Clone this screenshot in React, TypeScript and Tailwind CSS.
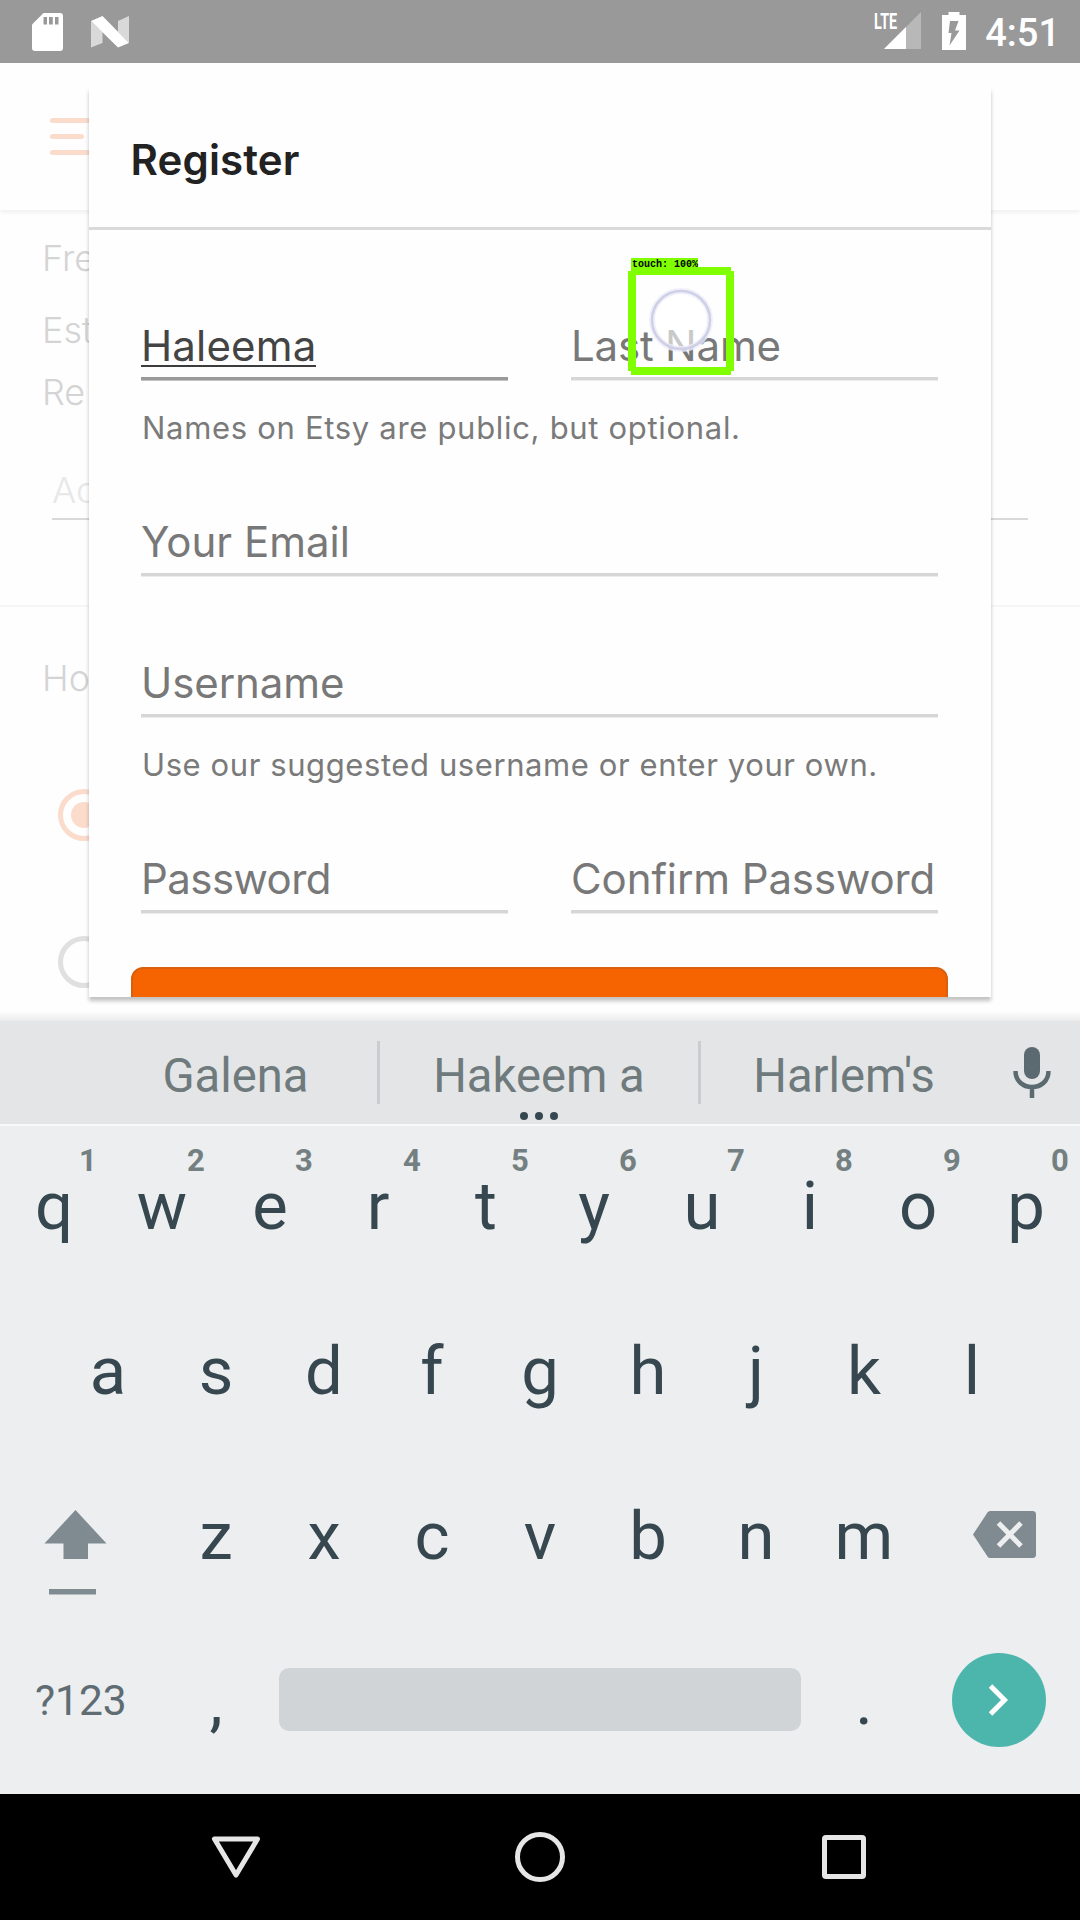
import type { ReactNode } from "react";
import { clsx } from "clsx";

function SdCardIcon() {
  return (
    <svg width="31" height="38" viewBox="0 0 31 38" fill="none">
      <path d="M11.5 0H28a3 3 0 0 1 3 3v32a3 3 0 0 1-3 3H3a3 3 0 0 1-3-3V11.500z" fill="#fff" />
      <path d="M11.500 4h3.500v7.500h-3.500zM17 4h3.800v7.500H17zM23 4h3.500v7.500H23z" fill="#999" />
    </svg>
  );
}

function NougatIcon() {
  return (
    <svg width="38" height="32" viewBox="0 0 38 32" fill="none">
      <path d="M0 5l11.500 11v11L0 31.500z" fill="#d9d9d9" />
      <path d="M38 0v27L27 16V5z" fill="#d9d9d9" />
      <path d="M0 5L11.500 0 38 27l-11 4.500z" fill="#fff" />
    </svg>
  );
}

function SignalIcon() {
  return (
    <svg width="37" height="37" viewBox="0 0 37 37">
      <path d="M37 0v37H0z" fill="#b8b8b8" />
      <path d="M22 15v22H0z" fill="#fff" />
    </svg>
  );
}

function BatteryIcon() {
  return (
    <svg width="24" height="38" viewBox="0 0 24 38">
      <path d="M6.500 0h11v3H24v35H0V3h6.500z" fill="#fff" />
      <path d="M8 9h8.500l-3.500 9.500H17.500L7.500 33.500l2-12.500H6.500z" fill="#999" />
    </svg>
  );
}

function StatusBar() {
  return (
    <div className="flex h-[63px] items-start bg-[#999999]">
      <div className="flex gap-[28px] pl-[32px] pt-[13px]">
        <SdCardIcon />
        <div className="pt-[3px]">
          <NougatIcon />
        </div>
      </div>
      <div className="ml-auto flex items-start pr-[20px]">
        <div className="relative mt-[12px]">
          <SignalIcon />
          <span className="absolute -left-[10px] -top-[2px] origin-left scale-x-[0.64] font-[Roboto] text-[22.500px] font-bold leading-[22px] text-white">
            LTE
          </span>
        </div>
        <div className="ml-[21px] mt-[12px]">
          <BatteryIcon />
        </div>
        <span className="ml-[19px] mt-[9px] font-[Roboto] text-[38px] font-medium leading-[48px] text-white">4:51</span>
      </div>
    </div>
  );
}

function BackgroundText({ children, className }: { children: string; className?: string }) {
  return <p className={clsx("text-[36px] font-light leading-[44px]", className ?? "text-[#d4d4d4]")}>{children}</p>;
}

function BackgroundPage() {
  return (
    <div className="flex h-full flex-col overflow-hidden bg-[#fefefe]">
      <div className="flex h-[147px] shrink-0 flex-col gap-[11px] pl-[50px] pt-[55px] shadow-[0_2px_5px_rgba(0,0,0,0.07)]">
        <div className="h-[5px] w-[50px] rounded-full bg-[#fbdccc]" />
        <div className="h-[5px] w-[34px] rounded-full bg-[#fbdccc]" />
        <div className="h-[5px] w-[50px] rounded-full bg-[#fbdccc]" />
      </div>
      <div className="h-[397px] shrink-0 border-b-2 border-[#f6f6f6] pl-[42px] pt-[26px]">
        <BackgroundText>Fre</BackgroundText>
        <BackgroundText className="mt-[28px] text-[#d4d4d4]">Est</BackgroundText>
        <BackgroundText className="mt-[18px] text-[#d4d4d4]">Re</BackgroundText>
        <div className="ml-[10px] mr-[52px] mt-[54px] h-[52px] border-b-2 border-[#d9d9d9]">
          <BackgroundText className="text-[#e8e8e8]">Ac</BackgroundText>
        </div>
      </div>
      <div className="pl-[42px] pt-[49px]">
        <BackgroundText>Ho</BackgroundText>
        <div className="ml-[16px] mt-[89px] flex size-[52px] items-center justify-center rounded-full border-[5px] border-[#fbdccc]">
          <div className="size-[26px] rounded-full bg-[#fbdccc]" />
        </div>
        <div className="ml-[16px] mt-[95px] size-[52px] rounded-full border-[5px] border-[#e0e0e0]" />
      </div>
    </div>
  );
}

function Field({ label, className, filled }: { label: string; className?: string; filled?: boolean }) {
  return (
    <div
      className={clsx(
        "h-[59px] flex-1 whitespace-nowrap border-b-[3px] text-[42px] leading-[50px]",
        filled
          ? "border-[#999999] text-[#444444] shadow-[0_1px_0_#c4c4c4]"
          : "border-[#d6d6d6] text-[#787878] shadow-[0_1px_0_#ececec]",
        className,
      )}
    >
      {filled ? <span className="inline-block h-[46px] border-b-2 border-[#3c3c3c]">{label}</span> : label}
    </div>
  );
}

function Helper({ children, className }: { children: string; className: string }) {
  return (
    <p className={clsx("whitespace-nowrap pl-px text-[31px] leading-[40px] text-[#7a7a7a]", className)}>{children}</p>
  );
}

function RegisterDialog() {
  return (
    <div className="absolute left-[88.500px] top-[24px] h-[910px] w-[902px] bg-[#fefefe] shadow-[0_4px_4px_rgba(0,0,0,0.24)]">
      <div className="h-full overflow-hidden">
        <div className="h-[143px] border-b-[3px] border-[#d9d9d9] pl-[42px] pt-[43px]">
          <h1 className="text-[42px] font-semibold leading-[60px] tracking-[0.15px] text-[#222222]">Register</h1>
        </div>
        <div className="pl-[52.500px] pr-[52.500px] pt-[91px]">
          <div className="flex gap-[63px]">
            <Field label="Haleema" filled className="tracking-[0.15px]" />
            <Field label="Last Name" className="tracking-[-0.2px]" />
          </div>
          <Helper className="mt-[28px] tracking-[0.69px]">Names on Etsy are public, but optional.</Helper>
          <div className="mt-[69px] flex">
            <Field label="Your Email" />
          </div>
          <div className="mt-[82px] flex">
            <Field label="Username" className="tracking-[-0.07px]" />
          </div>
          <Helper className="mt-[28px] tracking-[0.59px]">Use our suggested username or enter your own.</Helper>
          <div className="mt-[69px] flex gap-[63px]">
            <Field label="Password" className="tracking-[-0.55px]" />
            <Field label="Confirm Password" className="tracking-[-0.1px]" />
          </div>
        </div>
        <div className="ml-[42.500px] mr-[42.500px] mt-[54px] h-[90px] rounded-[12px] border-2 border-[#d9600f] bg-[#f56400]" />
      </div>
    </div>
  );
}

function TouchMarker() {
  return (
    <div className="absolute left-[628px] top-[204px] h-[108px] w-[106px]">
      <svg width="106" height="108" viewBox="0 0 106 108" fill="none">
        <circle cx="53" cy="53" r="29" fill="#fff" fillOpacity="0.6" stroke="#ececf8" strokeWidth="6" strokeOpacity="0.8" />
        <circle cx="53" cy="53" r="29" stroke="#cfcfe8" strokeWidth="2.500" />
        <path d="M3 0h100v4h3v100h-3v4H3v-4H0V4h3zM8 8v92h90V8z" fill="#7fff00" fillRule="evenodd" />
      </svg>
      <span className="absolute -top-[9px] left-[3px] h-[12px] w-[67px] whitespace-nowrap bg-[#7fff00] pl-px font-['Liberation_Mono'] text-[10px] font-bold leading-[14px] text-black">
        touch: 100%
      </span>
    </div>
  );
}

function MicIcon() {
  return (
    <svg width="38" height="52" viewBox="0 0 38 52" fill="none">
      <rect x="11" y="0" width="16" height="32" rx="8" fill="#5b6970" />
      <path d="M2.500 24c0 10 7.500 16 16.500 16s16.500-6 16.500-16M19 40v11" stroke="#5b6970" strokeWidth="4.500" />
    </svg>
  );
}

function Suggestion({ children }: { children: string }) {
  return <span className="font-[Roboto] text-[47.200px] leading-[56px] text-[#6f7a7d]">{children}</span>;
}

function SuggestionStrip() {
  return (
    <div className="relative flex h-[103px] items-center bg-[#e4e5e6]">
      <div className="ml-[94px] flex w-[283px] justify-center pt-[7px]">
        <Suggestion>Galena</Suggestion>
      </div>
      <div className="h-[63px] w-[3px] bg-[#cacdcf]" />
      <div className="flex w-[318px] justify-center pt-[7px]">
        <Suggestion>Hakeem a</Suggestion>
      </div>
      <div className="h-[63px] w-[3px] bg-[#cacdcf]" />
      <div className="flex w-[286px] justify-center pt-[7px]">
        <Suggestion>Harlem's</Suggestion>
      </div>
      <div className="ml-[26px]">
        <MicIcon />
      </div>
      <div className="absolute bottom-[4px] left-[520px] flex gap-[7px]">
        <div className="size-[8px] rounded-full bg-[#37474f]" />
        <div className="size-[8px] rounded-full bg-[#37474f]" />
        <div className="size-[8px] rounded-full bg-[#37474f]" />
      </div>
    </div>
  );
}

function Key({ children, hint }: { children: ReactNode; hint?: string }) {
  return (
    <div className="relative flex h-full w-[108px] items-center justify-center font-[Roboto] text-[67px] leading-[78px] text-[#37474f]">
      {children}
      {hint && (
        <span className="absolute left-[72px] top-[17px] w-[32px] text-center text-[31px] font-bold leading-[36px] text-[#747f81]">
          {hint}
        </span>
      )}
    </div>
  );
}

function ShiftIcon() {
  return (
    <svg width="64" height="86" viewBox="0 0 64 86" fill="#7f8b91">
      <path d="M31.500 0L62.500 33.500H44V49H19.500V33.500H.5z" />
      <path d="M5 79h47v5.500H5z" />
    </svg>
  );
}

function DeleteIcon() {
  return (
    <svg width="63" height="47" viewBox="0 0 63 47">
      <path d="M17 0H59.500a3.500 3.500 0 0 1 3.500 3.500v40a3.500 3.500 0 0 1-3.500 3.500H17q-1.500 0-2.500-1.500L0 23.500 14.500 1.500Q15.500 0 17 0z" fill="#7f8b91" />
      <path d="M25.500 12L48 35M48 12L25.500 35" stroke="#eceef0" strokeWidth="5" />
    </svg>
  );
}

function Keyboard() {
  return (
    <div className="flex h-[773px] flex-col bg-[#eceeef]">
      <SuggestionStrip />
      <div className="flex-1 border-t-2 border-[#f8f9f9]">
        <div className="flex h-[162px] pb-[2px]">
          {"qwertyuiop".split("").map((k, i) => (
            <Key key={k} hint={"1234567890"[i]}>
              {k}
            </Key>
          ))}
        </div>
        <div className="flex h-[165px] justify-center">
          {"asdfghjkl".split("").map((k) => (
            <Key key={k}>{k}</Key>
          ))}
        </div>
        <div className="flex h-[165px]">
          <div className="w-[162px] pl-[44px] pt-[57px]">
            <ShiftIcon />
          </div>
          {"zxcvbnm".split("").map((k) => (
            <Key key={k}>{k}</Key>
          ))}
          <div className="w-[162px] pl-[55px] pt-[58px]">
            <DeleteIcon />
          </div>
        </div>
        <div className="flex h-[165px] items-center">
          <div className="w-[162px] pl-[35px] font-[Roboto] text-[42.500px] leading-[50px] text-[#5f6c73]">?123</div>
          <Key>,</Key>
          <div className="mx-[9px] mb-[2px] h-[63px] w-[522px] rounded-[10px] bg-[#d0d4d7]" />
          <Key>.</Key>
          <div className="flex w-[162px] justify-center">
            <div className="mb-[2px] flex size-[94px] items-center justify-center rounded-full bg-[#4db6ac]">
              <svg width="20" height="32" viewBox="0 0 20 32" fill="none">
                <path d="M1.500 2l14 14-14 14" stroke="#fff" strokeWidth="5" />
              </svg>
            </div>
          </div>
        </div>
      </div>
    </div>
  );
}

function NavBar() {
  return (
    <div className="flex h-[126px] items-center bg-black pl-[211px]">
      <svg width="50" height="44" viewBox="0 0 50 44" fill="none">
        <path d="M3.500 4h43L25 40z" stroke="#e6e6e6" strokeWidth="5" strokeLinejoin="round" />
      </svg>
      <div className="ml-[254px] size-[50px] rounded-full border-[5.500px] border-[#e6e6e6]" />
      <div className="ml-[257px] size-[44px] rounded-[4px] border-[5px] border-[#e6e6e6]" />
    </div>
  );
}

export default function App() {
  return (
    <div className="flex h-[1920px] w-[1080px] flex-col overflow-hidden font-[Inter]">
      <StatusBar />
      <div className="relative h-[958px]">
        <BackgroundPage />
        <RegisterDialog />
        <TouchMarker />
        <div className="absolute inset-x-0 bottom-0 h-[10px] bg-gradient-to-b from-transparent to-[#ebebec]" />
      </div>
      <Keyboard />
      <NavBar />
    </div>
  );
}
